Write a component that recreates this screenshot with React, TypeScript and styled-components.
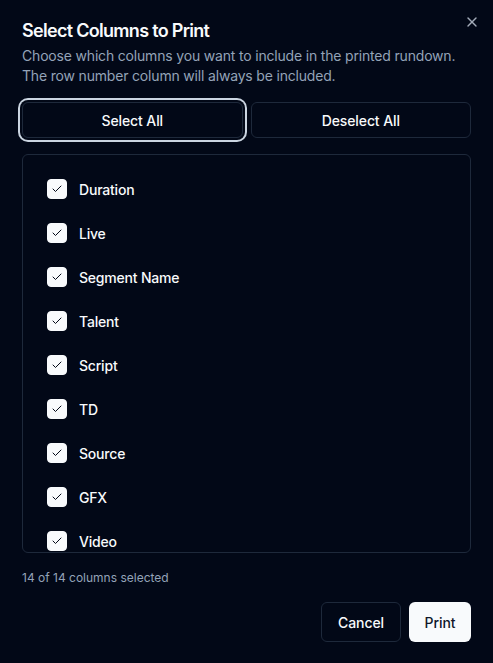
import React, { useState } from "react";
import styled, { createGlobalStyle } from "styled-components";
import { X, Check } from "lucide-react";

const GlobalStyle = createGlobalStyle`
  html, body { margin: 0; padding: 0; background: #020817; }
  body { font-family: Inter, "Noto Sans", sans-serif; color: #f8fafc; -webkit-font-smoothing: antialiased; }
  * { box-sizing: border-box; }
`;

const Dialog = styled.div`
  position: relative;
  height: 663px;
  display: flex;
  flex-direction: column;
  gap: 16px;
  padding: 22px 22px 21px 22px;
  background: #020817;
`;

const CloseButton = styled.button`
  position: absolute;
  top: 14px;
  right: 13px;
  width: 16px;
  height: 16px;
  padding: 0;
  border: none;
  background: transparent;
  color: #a3abb9;
  display: flex;
  align-items: center;
  justify-content: center;
  cursor: pointer;
`;

const Header = styled.div`
  display: flex;
  flex-direction: column;
  gap: 6px;
`;

const Title = styled.h2`
  margin: 0;
  font-size: 18px;
  line-height: 18px;
  font-weight: 600;
  letter-spacing: -0.7px;
  color: #f8fafc;
`;

const Description = styled.p`
  margin: 0;
  font-size: 14px;
  line-height: 20px;
  letter-spacing: -0.18px;
  color: #94a3b8;
`;

const ButtonRow = styled.div`
  display: grid;
  grid-template-columns: 1fr 1fr;
  gap: 8px;
`;

const OutlineButton = styled.button<{ $focused?: boolean; $h?: number; $w?: number }>`
  height: ${(p) => p.$h ?? 36}px;
  ${(p) => (p.$w ? `width: ${p.$w}px;` : "")}
  border: 1px solid #1e293b;
  border-radius: 6px;
  background: #020817;
  color: #f8fafc;
  font-family: inherit;
  font-size: 14px;
  font-weight: 500;
  letter-spacing: -0.1px;
  cursor: pointer;
  ${(p) => (p.$focused ? "box-shadow: 0 0 0 2px #020817, 0 0 0 4px #cbd5e1;" : "")}
`;

const PrimaryButton = styled.button`
  height: 40px;
  width: 62px;
  border: none;
  border-radius: 6px;
  background: #f8fafc;
  color: #0f172a;
  font-family: inherit;
  font-size: 14px;
  font-weight: 500;
  letter-spacing: -0.1px;
  cursor: pointer;
`;

const ListBox = styled.div`
  flex: 1;
  min-height: 0;
  overflow-y: auto;
  scrollbar-width: none;
  border: 1px solid #1e293b;
  border-radius: 6px;
  padding: 24px;
  display: flex;
  flex-direction: column;
  gap: 24px;
`;

const Item = styled.label`
  display: flex;
  align-items: center;
  gap: 12px;
  height: 20px;
  flex-shrink: 0;
  font-size: 14px;
  font-weight: 500;
  letter-spacing: -0.2px;
  color: #f8fafc;
  cursor: pointer;
`;

const Box = styled.span<{ $checked: boolean }>`
  width: 20px;
  height: 20px;
  border-radius: 4px;
  border: 1px solid #f8fafc;
  background: ${(p) => (p.$checked ? "#f8fafc" : "transparent")};
  color: #020817;
  display: flex;
  align-items: center;
  justify-content: center;
  flex-shrink: 0;
`;

const Count = styled.p`
  margin: 0;
  font-size: 12px;
  line-height: 16px;
  color: #94a3b8;
  transform: translateY(1px);
`;

const Footer = styled.div`
  display: flex;
  justify-content: flex-end;
  gap: 8px;
  margin-top: 1px;
`;

const COLUMNS = [
  "Duration",
  "Live",
  "Segment Name",
  "Talent",
  "Script",
  "TD",
  "Source",
  "GFX",
  "Video",
  "Audio",
  "Lighting",
  "Camera",
  "Notes",
  "Status",
];

export default function App() {
  const [selected, setSelected] = useState<string[]>(COLUMNS);
  const toggle = (c: string) =>
    setSelected((s) => (s.includes(c) ? s.filter((x) => x !== c) : [...s, c]));

  return (
    <>
      <GlobalStyle />
      <Dialog>
        <CloseButton aria-label="Close">
          <X size={16} strokeWidth={2} />
        </CloseButton>
        <Header>
          <Title>Select Columns to Print</Title>
          <Description>
            Choose which columns you want to include in the printed rundown. The row number column
            will always be included.
          </Description>
        </Header>
        <ButtonRow>
          <OutlineButton $focused onClick={() => setSelected(COLUMNS)}>
            Select All
          </OutlineButton>
          <OutlineButton onClick={() => setSelected([])}>Deselect All</OutlineButton>
        </ButtonRow>
        <ListBox>
          {COLUMNS.map((c) => {
            const checked = selected.includes(c);
            return (
              <Item key={c} onClick={() => toggle(c)}>
                <Box $checked={checked}>{checked && <Check size={12} strokeWidth={2} />}</Box>
                {c}
              </Item>
            );
          })}
        </ListBox>
        <Count>
          {selected.length} of {COLUMNS.length} columns selected
        </Count>
        <Footer>
          <OutlineButton $h={40} $w={80}>
            Cancel
          </OutlineButton>
          <PrimaryButton>Print</PrimaryButton>
        </Footer>
      </Dialog>
    </>
  );
}
